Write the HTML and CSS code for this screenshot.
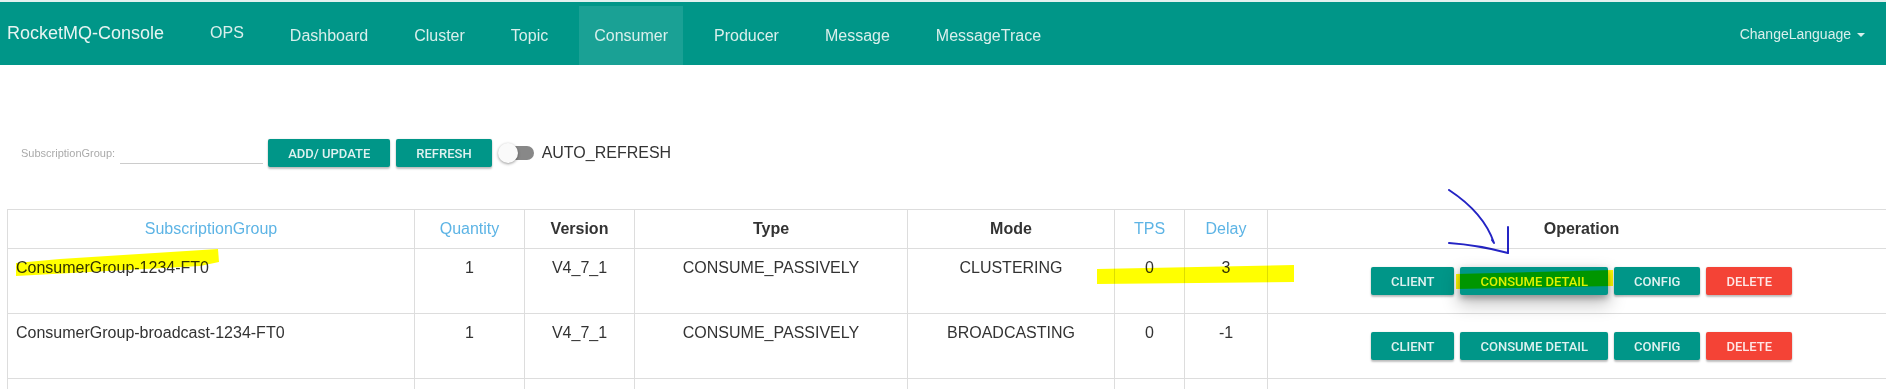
FILE: index.html
```html
<!DOCTYPE html>
<html lang="en">
<head>
<meta charset="utf-8">
<title>RocketMQ-Console</title>
<link rel="stylesheet" href="styles.css">
</head>
<body>
<nav class="navbar">
  <div class="brand">RocketMQ-Console</div>
  <ul class="nav">
    <li class="ops"><a href="#">OPS</a></li>
    <li><a href="#">Dashboard</a></li>
    <li><a href="#">Cluster</a></li>
    <li><a href="#">Topic</a></li>
    <li class="active"><a href="#">Consumer</a></li>
    <li><a href="#">Producer</a></li>
    <li><a href="#">Message</a></li>
    <li><a href="#">MessageTrace</a></li>
  </ul>
  <div class="lang">ChangeLanguage<span class="caret"></span></div>
</nav>

<main class="content">
  <div class="toolbar">
    <label class="field-label">SubscriptionGroup:</label>
    <input class="field-input" type="text">
    <button class="btn">ADD/ UPDATE</button>
    <button class="btn">REFRESH</button>
    <span class="toggle"><span class="track"></span></span>
    <span class="toggle-label">AUTO_REFRESH</span>
  </div>

  <table class="grid">
    <colgroup>
      <col class="c1"><col class="c2"><col class="c3"><col class="c4">
      <col class="c5"><col class="c6"><col class="c7"><col class="c8">
    </colgroup>
    <thead>
      <tr>
        <th class="sortable">SubscriptionGroup</th>
        <th class="sortable">Quantity</th>
        <th>Version</th>
        <th>Type</th>
        <th>Mode</th>
        <th class="sortable">TPS</th>
        <th class="sortable">Delay</th>
        <th>Operation</th>
      </tr>
    </thead>
    <tbody>
      <tr>
        <td class="name">ConsumerGroup-1234-FT0</td>
        <td>1</td>
        <td>V4_7_1</td>
        <td>CONSUME_PASSIVELY</td>
        <td>CLUSTERING</td>
        <td>0</td>
        <td>3</td>
        <td class="ops">
          <div class="ops-wrap">
            <button class="btn">CLIENT</button>
            <button class="btn raised">CONSUME DETAIL</button>
            <button class="btn">CONFIG</button>
            <button class="btn danger">DELETE</button>
          </div>
        </td>
      </tr>
      <tr>
        <td class="name">ConsumerGroup-broadcast-1234-FT0</td>
        <td>1</td>
        <td>V4_7_1</td>
        <td>CONSUME_PASSIVELY</td>
        <td>BROADCASTING</td>
        <td>0</td>
        <td>-1</td>
        <td class="ops">
          <div class="ops-wrap">
            <button class="btn">CLIENT</button>
            <button class="btn">CONSUME DETAIL</button>
            <button class="btn">CONFIG</button>
            <button class="btn danger">DELETE</button>
          </div>
        </td>
      </tr>
      <tr class="blank">
        <td>&nbsp;</td><td></td><td></td><td></td><td></td><td></td><td></td><td></td>
      </tr>
    </tbody>
  </table>
</main>

<svg class="annot" width="1886" height="389" viewBox="0 0 1886 389" aria-hidden="true">
  <g fill="#ffff00">
    <polygon points="16,263 60,259 218,249 219,262 200,266 16,276"/>
    <polygon points="1097,269 1294,265 1294,282 1097,284"/>
    <polygon points="1456,274 1613,270 1613,286 1456,289"/>
  </g>
  <g fill="none" stroke="#2424c4" stroke-width="2" stroke-linecap="round" stroke-linejoin="round">
    <path d="M1449,190 Q1484,213 1494,243 l-2,-3"/>
    <path d="M1508,227 L1508,253"/>
    <path d="M1449,243 Q1478,245 1508,253"/>
  </g>
</svg>
</body>
</html>
```

FILE: styles.css
```css
html, body {
  margin: 0;
  overflow: hidden;
}

body {
  font-family: "Liberation Sans", Arial, sans-serif;
  color: #333;
  background: #fff;
}

/* ---------- navbar ---------- */
.navbar {
  display: flex;
  align-items: flex-start;
  height: 63px;
  border-top: 2px solid #e2f1ef;
  background: #009688;
  padding: 0 21px 0 7px;
}

.brand {
  font-size: 18px;
  line-height: 62px;
  color: #e6f4f2;
  margin-right: 31px;
  white-space: nowrap;
}

.nav {
  display: flex;
  gap: 16px;
  list-style: none;
  margin: 4px 0 0;
  padding: 0;
}

.nav a {
  display: block;
  height: 59px;
  padding: 0 15px;
  line-height: 59px;
  font-size: 16px;
  color: #d9efec;
  text-decoration: none;
  white-space: nowrap;
}

.nav .ops a {
  line-height: 53px;
}

.nav .active a {
  background: #1aa195;
}

.lang {
  margin-left: auto;
  margin-top: 4px;
  line-height: 56px;
  font-size: 14px;
  color: #d9efec;
  white-space: nowrap;
}

.caret {
  display: inline-block;
  width: 0;
  height: 0;
  margin-left: 6px;
  vertical-align: middle;
  border-top: 4px solid #d9efec;
  border-left: 4px solid transparent;
  border-right: 4px solid transparent;
}

/* ---------- content ---------- */
.content {
  padding-left: 7px;
  overflow: hidden;
}

.toolbar {
  display: flex;
  align-items: center;
  height: 28px;
  margin: 74px 0 42px;
  padding-left: 14px;
}

.field-label {
  font-size: 11px;
  color: #aaa;
  margin-right: 5px;
}

.field-input {
  box-sizing: border-box;
  width: 143px;
  height: 21px;
  padding: 0;
  margin: 0 5px 0 0;
  border: 0;
  border-bottom: 1px solid #ccc;
  background: transparent;
  outline: none;
}

.btn {
  height: 28px;
  padding: 0 20px;
  margin: 0;
  border: 0;
  border-radius: 2px;
  background: #009688;
  color: rgba(255, 255, 255, 0.87);
  font-family: Roboto, "Liberation Sans", sans-serif;
  font-weight: 500;
  font-size: 13px;
  text-transform: uppercase;
  white-space: nowrap;
  box-shadow: 0 2px 2px rgba(0, 0, 0, 0.24), 0 0 2px rgba(0, 0, 0, 0.12);
  cursor: pointer;
}

.toolbar .btn + .btn {
  margin-left: 6px;
}

.btn.danger {
  background: #f44336;
}

.btn.raised {
  box-shadow: 0 8px 17px 2px rgba(0, 0, 0, 0.22), 0 3px 6px rgba(0, 0, 0, 0.3);
}

.toggle {
  position: relative;
  display: block;
  width: 36px;
  height: 20px;
  margin-left: 6px;
}

.track {
  display: block;
  width: 33px;
  height: 14px;
  margin: 3px 0 0 3px;
  border-radius: 7px;
  background: #888;
}

.toggle::after {
  content: "";
  position: absolute;
  left: 0;
  top: 0;
  width: 20px;
  height: 20px;
  border-radius: 50%;
  background: #fafafa;
  box-shadow: 0 1px 3px rgba(0, 0, 0, 0.4);
}

.toggle-label {
  margin-left: 8px;
  font-size: 16px;
  color: #333;
}

/* ---------- table ---------- */
.grid {
  border-collapse: collapse;
  table-layout: fixed;
  width: 1888px;
  font-size: 16px;
  line-height: 22px;
}

.c1 { width: 407px; }
.c2 { width: 110px; }
.c3 { width: 110px; }
.c4 { width: 273px; }
.c5 { width: 207px; }
.c6 { width: 70px; }
.c7 { width: 83px; }
.c8 { width: 628px; }

.grid th,
.grid td {
  border: 1px solid #ddd;
  padding: 8px;
  text-align: center;
  vertical-align: top;
  white-space: nowrap;
}

.grid th {
  font-weight: bold;
  color: #333;
}

.grid th.sortable {
  font-weight: normal;
  color: #5db4e5;
}

.grid td.name {
  text-align: left;
}

.grid td.ops {
  padding: 18px 8px;
  vertical-align: middle;
}

.ops-wrap {
  display: flex;
  justify-content: center;
  gap: 6px;
}

/* ---------- annotations ---------- */
.annot {
  position: absolute;
  top: 0;
  left: 0;
  pointer-events: none;
  mix-blend-mode: multiply;
}
```
